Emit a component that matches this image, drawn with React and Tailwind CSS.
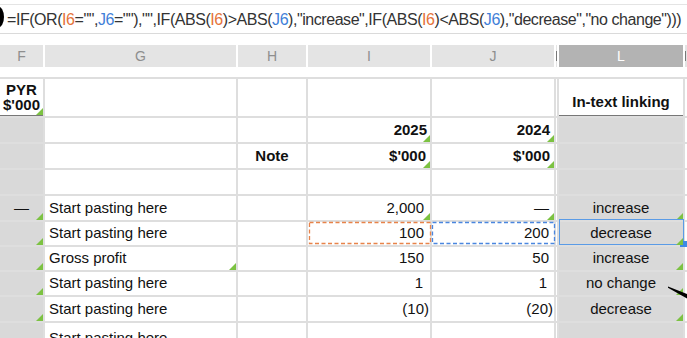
import React from "react";

const FONT = "font-['Liberation_Sans',Arial,sans-serif]";

function Tri() {
  return (
    <span className="absolute bottom-0 right-0 h-0 w-0 border-l-[7px] border-b-[7px] border-l-transparent border-b-[#7cc242]" />
  );
}

function Cell({ className = "", children, tri = false }) {
  return (
    <div className={`relative flex items-center overflow-visible ${className}`}>
      {children}
      {tri && <Tri />}
    </div>
  );
}

const W = "bg-white";
const G = "bg-[#d9d9d9]";

function Row({ f, g, h, i, j, l }) {
  return (
    <>
      {f}
      {g}
      {h}
      {i}
      {j}
      <div className="bg-white" />
      {l}
      <div className="bg-white" />
    </>
  );
}

const Empty = ({ grey }) => <div className={grey ? G : W} />;

function Paste({ text = "Start pasting here", tri }) {
  return (
    <Cell className={`${W} pl-[4px]`} tri={tri}>
      <span className="whitespace-nowrap">{text}</span>
    </Cell>
  );
}

function NumI({ children, pr = "pr-[6px]", tri, extra }) {
  return (
    <Cell className={`${W} justify-end ${pr}`} tri={tri}>
      {extra}
      <span className="relative">{children}</span>
    </Cell>
  );
}

function LCell({ children, tri = true, extra }) {
  return (
    <Cell className={`${G} justify-center`} tri={tri}>
      {extra}
      <span className="relative whitespace-nowrap">{children}</span>
    </Cell>
  );
}

export default function App() {
  const I6 = <span className="text-[#e5743a]">I6</span>;
  const J6 = <span className="text-[#3f80d8]">J6</span>;
  return (
    <div className={`relative h-[338px] w-[687px] overflow-hidden bg-white text-[#111] ${FONT}`}>
      {/* formula bar */}
      <div className="relative mt-[4px] flex h-[30px] items-center border-y border-t-[#e4e4e4] border-b-[#dadada] pl-[7px] pt-[1px]">
        <svg className="absolute left-0 top-[-4px]" width="10" height="32">
          <ellipse cx="-2" cy="16" rx="6" ry="10.5" fill="#000" />
        </svg>
        <span className="whitespace-nowrap text-[16px] tracking-[-0.45px] text-[#333]">
          =IF(OR({I6}="",{J6}=""),"",IF(ABS({I6})&gt;ABS({J6}),"increase",IF(ABS({I6})&lt;ABS({J6}),"decrease","no change")))
        </span>
      </div>

      {/* column headers */}
      <div className="mt-[11px] grid h-[22px] grid-cols-[43px_191px_68px_122px_122px_1px_124px_1fr] gap-x-[2px] bg-white text-[14px] text-[#8e8e8e]">
        <div className="flex items-center justify-center bg-[#e4e4e4]">F</div>
        <div className="flex items-center justify-center bg-[#e4e4e4]">G</div>
        <div className="flex items-center justify-center bg-[#e4e4e4]">H</div>
        <div className="flex items-center justify-center bg-[#e4e4e4]">I</div>
        <div className="flex items-center justify-center bg-[#e4e4e4]">J</div>
        <div className="flex items-center justify-center bg-[#e4e4e4]">
          <div className="h-[10px] w-[1px] bg-[#777]" />
        </div>
        <div className="flex items-center justify-center bg-[#b3b3b3] text-white">L</div>
        <div className="flex items-center bg-[#e4e4e4]">
          <div className="ml-[0px] h-[10px] w-[1px] bg-[#777]" />
        </div>
      </div>

      {/* table */}
      <div className="mt-[10px] grid grid-cols-[43px_191px_68px_122px_122px_1px_124px_1fr] grid-rows-[37px_24px_24px_24px_24px_23px_23px_23px_24px_30px] gap-[2px] bg-[#dedede] pt-[2px] text-[15px]">
        {/* row 1 */}
        <Row
          f={
            <Cell className={`${W} flex-col justify-center border-b border-b-[#777] pt-[1px] text-center font-bold leading-[14.5px]`} tri>
              <span>PYR</span>
              <span>$'000</span>
            </Cell>
          }
          g={<Empty />}
          h={<Empty />}
          i={<Empty />}
          j={<Empty />}
          l={
            <Cell className={`${W} items-end justify-center border-b border-b-[#777] pb-[2px] font-bold`}>
              <span className="whitespace-nowrap">In-text linking</span>
            </Cell>
          }
        />
        {/* row 2 */}
        <Row
          f={<Empty grey />}
          g={<Empty />}
          h={<Empty />}
          i={<NumI pr="pr-[3px]" tri><b>2025</b></NumI>}
          j={<NumI pr="pr-[4px]" tri><b>2024</b></NumI>}
          l={<Empty grey />}
        />
        {/* row 3 */}
        <Row
          f={<Empty grey />}
          g={<Empty />}
          h={<Cell className={`${W} justify-center font-bold`}>Note</Cell>}
          i={<NumI pr="pr-[4px]" tri><b>$'000</b></NumI>}
          j={<NumI pr="pr-[4px]" tri><b>$'000</b></NumI>}
          l={<Empty grey />}
        />
        {/* row 4 */}
        <Row
          f={<Empty grey />}
          g={<Empty />}
          h={<Empty />}
          i={<Empty />}
          j={<Empty />}
          l={<Empty grey />}
        />
        {/* row 5 */}
        <Row
          f={<Cell className={`${G} justify-center`} tri>—</Cell>}
          g={<Paste />}
          h={<Empty />}
          i={<NumI tri>2,000</NumI>}
          j={<NumI pr="pr-[5px]" tri>—</NumI>}
          l={<LCell>increase</LCell>}
        />
        {/* row 6 */}
        <Row
          f={<Cell className={G} tri />}
          g={<Paste />}
          h={<Empty />}
          i={
            <NumI
              extra={
                <svg className="absolute left-0 top-0 overflow-visible" width="122" height="23">
                  <rect x="1.5" y="0.5" width="121" height="21" fill="none" stroke="#e8834a" strokeWidth="1.3" strokeDasharray="4 2.5" />
                </svg>
              }
            >
              100
            </NumI>
          }
          j={
            <NumI
              pr="pr-[5px]"
              extra={
                <svg className="absolute left-0 top-0 overflow-visible" width="122" height="23">
                  <rect x="0.5" y="0.5" width="122" height="21" fill="none" stroke="#4a86df" strokeWidth="1.3" strokeDasharray="4 2.5" />
                </svg>
              }
            >
              200
            </NumI>
          }
          l={
            <LCell
              extra={
                <>
                  <div className="absolute left-0 right-[-1px] top-[-3px] bottom-0 border border-[#5a9be6]" />
                  <div className="absolute right-[-4px] bottom-[-2px] h-[6px] w-[7px] bg-[#3d8ae5]" />
                </>
              }
            >
              decrease
            </LCell>
          }
        />
        {/* row 7 */}
        <Row
          f={<Cell className={G} tri />}
          g={<Paste text="Gross profit" tri />}
          h={<Empty />}
          i={<NumI>150</NumI>}
          j={<NumI pr="pr-[5px]">50</NumI>}
          l={<LCell>increase</LCell>}
        />
        {/* row 8 */}
        <Row
          f={<Cell className={G} tri />}
          g={<Paste />}
          h={<Empty />}
          i={<NumI pr="pr-[7px]">1</NumI>}
          j={<NumI pr="pr-[7px]">1</NumI>}
          l={<LCell>no change</LCell>}
        />
        {/* row 9 */}
        <Row
          f={<Cell className={G} tri />}
          g={<Paste />}
          h={<Empty />}
          i={<NumI pr="pr-[1px]">(10)</NumI>}
          j={<NumI pr="pr-[1px]">(20)</NumI>}
          l={<LCell>decrease</LCell>}
        />
        {/* row 10 */}
        <Row
          f={<Empty grey />}
          g={<Paste />}
          h={<Empty />}
          i={<Empty />}
          j={<Empty />}
          l={<Empty grey />}
        />
      </div>

      {/* annotation stroke */}
      <svg className="pointer-events-none absolute left-0 top-0" width="687" height="338">
        <polygon points="668,286.6 688,294.5 688,299 668,287.8" fill="#000" />
      </svg>
    </div>
  );
}
